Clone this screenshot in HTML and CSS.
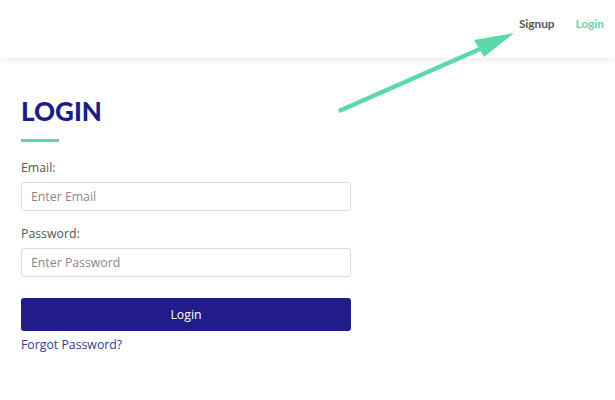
FILE: index.html
```html
<!DOCTYPE html>
<html lang="en">
<head>
    <meta charset="UTF-8">
    <meta name="viewport" content="width=device-width, initial-scale=1.0">
    <title>Login</title>
    <link rel="stylesheet" href="styles.css">
</head>
<body>
    <header>
        <nav>
            <a href="#" class="nav-link">Signup</a>
            <a href="#" class="nav-link active">Login</a>
        </nav>
    </header>

    <!-- pointer drawn over the page -->
    <svg class="pointer" width="615" height="130" viewBox="0 0 615 130">
        <line x1="339" y1="111" x2="480" y2="49" stroke="#5cd8a9" stroke-width="4.5"/>
        <polygon points="514,33 474,40 484,57" fill="#5cd8a9"/>
    </svg>

    <div class="container">
        <h1>LOGIN</h1>
        <div class="bar"></div>
        <form>
            <label for="email">Email:</label>
            <input type="text" id="email" placeholder="Enter Email">
            <label for="password">Password:</label>
            <input type="password" id="password" placeholder="Enter Password">
            <button type="button">Login</button>
        </form>
        <a href="#" class="forgot">Forgot Password?</a>
    </div>
</body>
</html>
```

FILE: styles.css
```css
body {
    font-family: 'Open Sans', sans-serif;
    margin: 0;
    padding: 0;
    background: #fff;
    color: #555;
}

header {
    height: 58px;
    background: #fff;
    box-shadow: 0 2px 8px rgba(0, 0, 0, 0.08);
}

nav {
    display: flex;
    justify-content: flex-end;
    gap: 21px;
    padding: 16px 11px 0 0;
}

.nav-link {
    font-family: 'Lato', sans-serif;
    font-weight: bold;
    font-size: 11.8px;
    color: #555;
    text-decoration: none;
}

.nav-link.active {
    color: #5cd8a9;
}

.pointer {
    position: absolute;
    top: 0;
    left: 0;
    pointer-events: none;
}

.container {
    width: 330px;
    padding: 35px 0 0 21px;
}

h1 {
    font-family: 'Lato', sans-serif;
    font-weight: 900;
    font-size: 26px;
    color: #1f1c86;
    margin: 0;
    line-height: 36px;
}

.bar {
    width: 38px;
    height: 3px;
    background: #5cd8a9;
    margin: 10px 0 16px;
}

form {
    display: flex;
    flex-direction: column;
}

label {
    font-size: 12.3px;
    line-height: 20px;
    color: #555;
    margin-bottom: 4px;
}

input {
    font-family: 'Open Sans', sans-serif;
    font-size: 12.3px;
    height: 29px;
    box-sizing: border-box;
    padding: 0 9px;
    border: 1px solid #dcdcdc;
    border-radius: 3px;
    margin-bottom: 13px;
    color: #555;
}

input::placeholder {
    color: #888;
}

button {
    margin-top: 8px;
    height: 33px;
    background-color: #211c8a;
    color: white;
    font-family: 'Open Sans', sans-serif;
    font-size: 12.3px;
    border: none;
    border-radius: 3px;
    cursor: pointer;
}

.forgot {
    display: inline-block;
    margin-top: 5px;
    font-size: 12.3px;
    color: #3a3894;
    text-decoration: none;
}
```
